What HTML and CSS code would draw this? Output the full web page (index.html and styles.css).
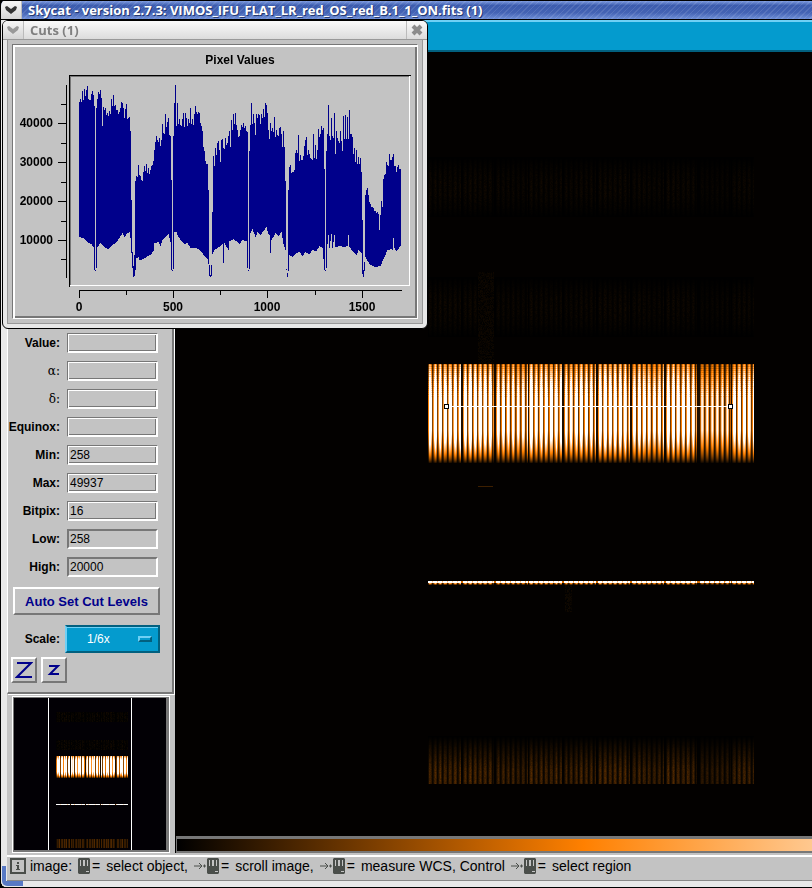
FILE: index.html
```html
<!DOCTYPE html>
<html lang="en">
<head>
<meta charset="utf-8"/>
<meta content="width=device-width, initial-scale=1.0" name="viewport"/>
<title>Skycat - version 2.7.3</title>
<link rel="stylesheet" href="styles.css">
</head>
<body>
<div class="main-window">
  <header class="titlebar">
    <button class="title-menu" aria-label="Window menu">
      <svg width="14" height="10" viewBox="0 0 14 10"><path d="M1 2 L3 1 L7 4 L11 1 L13 2 L12 5 L7 9 L2 5 Z" fill="#333"/></svg>
    </button>
    <span class="title-text">Skycat - version 2.7.3: VIMOS_IFU_FLAT_LR_red_OS_red_B.1_1_ON.fits (1)</span>
  </header>
  <div class="frame">
    <div class="menubar"></div>
    <div class="workspace">
      <aside class="sidebar">
        <form class="panel">
          <div class="field"><label for="value">Value:</label><input id="value" type="text" readonly></div>
          <div class="field"><label class="greek" for="alpha">α:</label><input id="alpha" type="text" readonly></div>
          <div class="field"><label class="greek" for="delta">δ:</label><input id="delta" type="text" readonly></div>
          <div class="field"><label for="equinox">Equinox:</label><input id="equinox" type="text" readonly></div>
          <div class="field"><label for="min">Min:</label><input id="min" type="text" value="258" readonly></div>
          <div class="field"><label for="max">Max:</label><input id="max" type="text" value="49937" readonly></div>
          <div class="field"><label for="bitpix">Bitpix:</label><input id="bitpix" type="text" value="16" readonly></div>
          <div class="field"><label for="low">Low:</label><input class="editable" id="low" type="text" value="258"></div>
          <div class="field"><label for="high">High:</label><input class="editable" id="high" type="text" value="20000"></div>
          <button class="auto-cut" type="button">Auto Set Cut Levels</button>
          <div class="scale-row">
            <label for="scale">Scale:</label>
            <div class="scale-menu">
              <select id="scale"><option>1/6x</option></select>
            </div>
          </div>
          <div class="zoom-row">
            <button class="zoom-btn" type="button" aria-label="Zoom in">
              <svg width="18" height="18" viewBox="0 0 18 18"><path d="M2 2 H16 L2 16 H17" fill="none" stroke="#00008b" stroke-width="2"/></svg>
            </button>
            <button class="zoom-btn" type="button" aria-label="Zoom out">
              <svg width="18" height="18" viewBox="0 0 18 18"><path d="M4 5 H13 L5 13 H14" fill="none" stroke="#00008b" stroke-width="2"/></svg>
            </button>
          </div>
        </form>
        <div class="pan"><canvas id="pan" width="152" height="152"></canvas></div>
      </aside>
      <main class="viewer">
        <div class="image"><canvas id="sky" width="636" height="784"></canvas></div>
        <div class="colorbar"></div>
      </main>
    </div>
    <footer class="status">
      <svg class="info" width="16" height="16" viewBox="0 0 16 16"><rect x="1" y="1" width="14" height="14" fill="none" stroke="#4a4e4a" stroke-width="2"/><path d="M7 4h2v2H7zM6 7h3v4h1v1H6v-1h1V8H6z" fill="#4a4e4a"/></svg>
      <span class="word">image:</span>
      <svg class="mouse" width="12" height="16"><use href="#mouse"/></svg><span class="eq">=</span>
      <span class="word">select object,</span>
      <svg class="arrow" width="13" height="16"><use href="#arrow"/></svg><svg class="mouse" width="12" height="16"><use href="#mouse"/></svg><span class="eq">=</span>
      <span class="word">scroll image,</span>
      <svg class="arrow" width="13" height="16"><use href="#arrow"/></svg><svg class="mouse" width="12" height="16"><use href="#mouse"/></svg><span class="eq">=</span>
      <span class="word">measure WCS, Control</span>
      <svg class="arrow" width="13" height="16"><use href="#arrow"/></svg><svg class="mouse" width="12" height="16"><use href="#mouse"/></svg><span class="eq">=</span>
      <span class="word">select region</span>
    </footer>
  </div>
  <div class="corner"></div>
</div>

<section class="cuts-window">
  <header class="cuts-title">
    <button class="title-menu" aria-label="Cuts menu">
      <svg width="14" height="10" viewBox="0 0 14 10"><path d="M1 2 L3 1 L7 4 L11 1 L13 2 L12 5 L7 9 L2 5 Z" fill="#999"/></svg>
    </button>
    <span class="cuts-name">Cuts (1)</span>
    <button class="close" aria-label="Close">
      <svg width="12" height="12" viewBox="0 0 12 12"><path d="M2 2 L10 10 M10 2 L2 10" stroke="#8c8c8c" stroke-width="4"/></svg>
    </button>
  </header>
  <div class="cuts-body">
    <div class="graph">
      <svg id="plot" viewBox="15 47 400 269" width="400" height="269"></svg>
    </div>
  </div>
</section>

<svg class="symbols" width="0" height="0">
  <symbol id="mouse" viewBox="0 0 12 16">
    <path d="M1 0h10l1 1v14l-1 1H1l-1-1V1z" fill="#4a4e4a"/>
    <path d="M2 2h1v6H2zM5 2h2v6H5zM9 2h1v6H9zM8 13h3v1H8z" fill="#c3c3c3"/>
  </symbol>
  <symbol id="arrow" viewBox="0 0 13 16">
    <path d="M0 8h8M5 5l3 3-3 3M9 8h3M10.500 6.500v3" fill="none" stroke="#4a4e4a"/>
  </symbol>
</svg>
<script src="skycat.js"></script>
</body>
</html>
```
FILE: styles.css
```css
*, *::after {
  box-sizing: border-box;
}
body {
  margin: 0;
  background: #000;
  font-family: "Liberation Sans", Arial, sans-serif;
  font-size: 12px;
  color: #000;
}
button {
  padding: 0;
  border: none;
  background: none;
}
.symbols {
  position: absolute;
}

/* main window */
.main-window {
  position: relative;
  overflow: hidden;
  border-left: 1px solid #000;
  border-radius: 6px 0 0 6px;
}
.titlebar {
  display: flex;
  align-items: center;
  height: 20px;
  border-top: 1px solid #000;
  border-bottom: 1px solid #000;
  background:
    repeating-linear-gradient(135deg, rgba(255, 255, 255, 0.10) 0 1px, transparent 1px 4px),
    linear-gradient(#7d9be0, #3c5cae 25%, #4463b4 65%, #6f8fd8);
  color: #fff;
}
.title-menu {
  display: flex;
  align-items: center;
  justify-content: center;
  width: 21px;
  height: 18px;
  border-right: 1px solid #bbb;
  background: linear-gradient(#f6f6f6, #d4d4d4);
}
.title-text {
  padding-left: 6px;
  font-family: "Open Sans", sans-serif;
  font-size: 13px;
  font-weight: bold;
  line-height: 18px;
  text-shadow: 1px 1px 0 #23386f;
  white-space: nowrap;
}
.frame {
  border-left: 6px solid #e8e8e8;
  border-bottom: 6px solid #e8e8e8;
  background: #c3c3c3;
}
.menubar {
  height: 32px;
  border-top: 2px solid #6fd0f5;
  border-bottom: 2px solid #02607f;
  background: #049bce;
}
.workspace {
  display: grid;
  grid-template-columns: 168px minmax(0, 1fr);
}
.corner {
  position: absolute;
  left: 1px;
  bottom: 1px;
  width: 21px;
  height: 20px;
  border-left: 4px solid #5879c4;
  border-bottom: 5px solid #5879c4;
  border-bottom-left-radius: 5px;
}

/* controls */
.sidebar {
  display: flex;
  flex-direction: column;
}
.panel {
  flex: 1;
  display: flex;
  flex-direction: column;
  justify-content: flex-end;
  padding: 0 14px 9px 3px;
  border-left: 1px solid #fff;
  border-right: 2px solid #777;
  border-bottom: 2px solid #777;
  box-shadow: 1px 1px 0 #fff;
  margin-right: 1px;
}
label {
  font-weight: bold;
  text-align: right;
}
.field {
  display: flex;
  gap: 7px;
  align-items: center;
  justify-content: flex-end;
  margin-bottom: 8px;
}
.field label {
  white-space: nowrap;
}
.field .greek {
  font-family: "DejaVu Serif", serif;
  font-weight: normal;
}
.field input {
  flex: none;
  width: 91px;
  height: 20px;
  padding: 0 2px;
  border: 1px solid;
  border-color: #777 #fff #fff #777;
  outline: 1px solid;
  outline-color: #fff;
  outline-offset: -2px;
  background: #c3c3c3;
  font-family: inherit;
  font-size: 12px;
  color: #000;
  border-radius: 0;
  box-shadow: inset -2px -2px 0 #777;
}
.field input.editable {
  border-width: 2px;
  padding: 0 1px;
  outline: none;
  box-shadow: none;
}
.auto-cut {
  align-self: flex-end;
  width: 147px;
  height: 28px;
  margin: 2px -2px 0 0;
  border: 2px solid;
  border-color: #fff #777 #777 #fff;
  font-family: inherit;
  font-size: 13px;
  font-weight: bold;
  color: #00008b;
  white-space: nowrap;
}
.scale-row {
  display: flex;
  align-items: center;
  justify-content: flex-end;
  gap: 5px;
  margin: 10px -2px 0 0;
}
.scale-menu {
  position: relative;
  width: 95px;
  height: 28px;
}
.scale-menu select {
  appearance: none;
  width: 100%;
  height: 100%;
  padding: 0 0 0 20px;
  border: 2px solid;
  border-color: #02607f #02607f #02607f #6fd0f5;
  border-radius: 0;
  box-shadow: inset 0 1px 0 #6fd0f5;
  background: #049bce;
  font-family: inherit;
  font-size: 12px;
  color: #fff;
}
.scale-menu::after {
  content: "";
  position: absolute;
  right: 8px;
  top: 11px;
  width: 14px;
  height: 6px;
  border: 2px solid;
  border-color: #6fd0f5 #02607f #02607f #6fd0f5;
}
.zoom-row {
  display: flex;
  gap: 4px;
  margin-top: 4px;
}
.zoom-btn {
  display: flex;
  align-items: center;
  justify-content: center;
  width: 26px;
  height: 26px;
  border: 2px solid;
  border-color: #fff #777 #777 #fff;
}
.pan {
  margin: 2px 5px 0 5px;
  padding: 1px 2px 2px 1px;
  border: 1px solid;
  border-color: #fff;
  background: #777;
}
.pan canvas {
  display: block;
}

/* image */
.viewer {
  border-left: 1px solid #000;
}
.image {
  overflow: hidden;
  background: #000;
}
.image canvas {
  display: block;
}
.colorbar {
  height: 17px;
  border: 1px solid #777;
  border-width: 3px 0 2px 1px;
  background: linear-gradient(to right, #000, #ff8000 64%, #ffc88f);
}
.status {
  display: flex;
  align-items: center;
  height: 26px;
  margin-top: 2px;
  padding: 0 0 5px 3px;
  border-top: 2px solid #fff;
  border-bottom: 1px solid #888;
  font-size: 14px;
  white-space: nowrap;
}
.status svg {
  flex: none;
}
.word {
  margin: 0 6px 0 4px;
}
.eq {
  margin: 0 2px 0 2px;
}

/* cuts window */
.cuts-window {
  position: absolute;
  left: 2px;
  top: 20px;
  width: 426px;
  border: 1px solid #000;
  border-radius: 6px;
  background: #e8e8e8;
  overflow: hidden;
}
.cuts-title {
  display: flex;
  align-items: center;
  height: 19px;
  border-bottom: 1px solid #999;
  background: linear-gradient(#fafafa, #dcdcdc);
}
.cuts-name {
  flex: 1;
  padding-left: 6px;
  font-family: "Open Sans", sans-serif;
  font-size: 13px;
  font-weight: bold;
  line-height: 18px;
  color: #808080;
}
.close {
  display: flex;
  align-items: center;
  justify-content: center;
  width: 21px;
  height: 18px;
  border-left: 1px solid #bbb;
}
.cuts-body {
  margin: 0 4px 4px;
  padding: 4px;
  border: 1px solid #999;
  border-top: none;
  background: #c3c3c3;
}
.graph {
  border: 1px solid;
  border-color: #777 #fff #fff #777;
  padding: 2px 0 2px 2px;
  box-shadow: inset 2px 2px 0 #fff, inset -2px -2px 0 #777;
}
.graph svg {
  display: block;
}
.graph text {
  font-family: "Liberation Sans", Arial, sans-serif;
  font-size: 12px;
  font-weight: bold;
}
```
FILE: skycat.js
```js
// ---- cut graph ----
// upper edge of the trace, one value per column, keyed by first column
const TOPS = {
  79: [102,99,102,91,100,89,96,90,86,99,100,100,94,91,95,106,270],
  96: [108,99,92,94,90,98,126,107,110,108,115,113,116,111,114,99,106,95,106,105,110,110,114,112,108,102,103,108,118,109,104,119,118,117,131],
  131: [200,252,266,255],
  135: [181,176,177,165,175,176,180,181,172,166,171,164,173,168,174,170,166,165,161,150,142,136,140,142,138,146,140,124,133,134,114,127,122,118,135,136],
  171: [180,270],
  173: [136,103,85,126,103,124,119,125,126,119,113,127,113,118,126,119,123,108,124,119,125,114,106,112,114,112,113,123,126,131,147,151,161,164],
  208: [190,265,275,265,212],
  213: [156,166,148,155,143,141,150,162,140,139,148,149,138,145,143,136,131,147,120,130,114,124,113,125,130,137,136,130,125,127,123,128,126,131,132,144],
  248: [270],
  249: [151,125,103,124,114,123,135,114,118,114,115,124,114,118,109,117,103,105,113,130,139,123,131,128,132,117,137,130,135,136,128,127,134,147,131,147],
  285: [181,269,273,190],
  289: [167,165,173,172,172,170,153,150,153,135,161,155,160,160,156,146,140,137,155,150,154,158,159,160,134,158,145,159,150,129,137,134,126,130,128,169],
  325: [270],
  326: [151,134,105,136,140,118,136,138,113,154,131,138,141,143,131,141,151,116,139,115,139,117,139,110,134,134,137,154,148,162,150,164,157,164,158,172],
  362: [220,270,262],
  365: [195,190,188,195,202,204,207,207,208,211,211,213,212,214,230,215,201,207,179,175,174,162,165,166,154,160,160,157,154,166,166,172,167,165,169,169]
};
const BOTTOMS = [
  [79,237],[83,238],[88,243],[91,244],[93,247],[94,270],[95,271],[96,268],[97,247],[100,243],[105,248],[108,249],[111,246],
  [117,241],[120,236],[122,233],[124,237],[126,234],[129,232],[130,238],[131,253],[132,268],[133,277],[134,276],[135,270],
  [136,258],[138,257],[139,260],[143,259],[147,256],[150,255],[153,251],[154,243],[158,242],[160,246],[162,240],[165,237],
  [168,234],[169,238],[170,242],[171,270],[172,271],[173,269],[174,232],[176,232],[178,237],[181,241],[184,244],[187,243],
  [190,248],[195,248],[198,249],[201,252],[204,256],[207,259],[208,264],[209,276],[210,277],[211,276],[212,254],[214,250],
  [217,248],[221,245],[222,244],[223,263],[224,243],[228,250],[229,241],[233,239],[237,242],[239,244],[242,240],[246,241],
  [247,268],[248,271],[249,269],[250,233],[252,229],[255,237],[257,232],[260,235],[263,231],[266,227],[268,234],[269,235],
  [270,253],[271,240],[275,233],[278,236],[281,232],[283,244],[285,250],[286,270],[287,277],[288,271],[289,255],[292,257],
  [296,253],[299,252],[302,256],[305,252],[309,254],[312,250],[316,251],[319,246],[322,248],[324,270],[325,271],[326,268],
  [327,244],[328,235],[329,248],[331,234],[332,248],[334,235],[335,247],[340,246],[343,247],[347,246],[348,235],[349,247],
  [352,251],[356,255],[358,250],[361,253],[362,274],[363,277],[364,271],[365,257],[369,264],[375,267],[380,266],[383,259],
  [387,250],[391,249],[392,250],[393,238],[394,248],[396,251],[400,246]
];

function bottomAt(x) {
  for (let i = 1; i < BOTTOMS.length; i++) {
    const [x0, y0] = BOTTOMS[i - 1];
    const [x1, y1] = BOTTOMS[i];
    if (x <= x1) return Math.round(y0 + (y1 - y0) * (x - x0) / (x1 - x0));
  }
  return 248;
}

function line(x, y, w, h, color) {
  return `<rect x="${x}" y="${y}" width="${w}" height="${h}" fill="${color}"/>`;
}

function drawPlot() {
  let s = '<text x="240" y="64" text-anchor="middle">Pixel Values</text>';
  // plot frame
  s += line(69, 75, 342, 1, "#000") + line(69, 75, 1, 212, "#000");
  s += line(70, 76, 340, 1, "#777") + line(70, 76, 1, 210, "#777");
  s += line(409, 76, 1, 210, "#fff") + line(70, 285, 340, 1, "#fff");
  // axes
  s += line(66, 85, 1, 193, "#000") + line(79, 290, 323, 1, "#000");
  for (const [y, label] of [[123, "40000"], [162, "30000"], [201, "20000"], [240, "10000"]]) {
    s += line(58, y, 8, 1, "#000");
    s += `<text x="53" y="${y + 4}" text-anchor="end">${label}</text>`;
  }
  for (const y of [104, 143, 182, 221, 259]) s += line(61, y, 5, 1, "#000");
  for (const [x, label] of [[79, "0"], [173, "500"], [267, "1000"], [362, "1500"]]) {
    s += line(x, 290, 1, 8, "#000");
    s += `<text x="${x}" y="311" text-anchor="middle">${label}</text>`;
  }
  for (const x of [126, 220, 315]) s += line(x, 290, 1, 5, "#000");

  const tops = [];
  for (const start in TOPS) {
    TOPS[start].forEach((top, i) => { tops[Number(start) + i] = top; });
  }
  let d = "";
  for (let x = 79; x <= 400; x++) {
    const top = tops[x] || tops[x - 1];
    const bottom = Math.max(bottomAt(x), top + 1);
    d += `M${x} ${top}h1V${bottom}h-1z`;
  }
  s += `<path d="${d}" fill="#00008b" shape-rendering="crispEdges"/>`;
  document.getElementById("plot").innerHTML = s;
}

// ---- spectra image ----
const LEFT = 252, RIGHT = 578;
const GAPS = [[285, 2], [318, 2], [352, 1], [386, 2], [420, 2], [454, 2], [488, 2], [521, 3], [555, 1]];
const BLOCK = [1.05, 1.1, 0.85, 1, 0.9, 1.05, 0.9, 1, 0.6, 0.9];

let seed = 7;
function rnd() {
  seed = (seed * 16807) % 2147483647;
  return seed / 2147483647;
}

function fiberProfile() {
  const f = [];
  for (let x = LEFT; x < RIGHT; x++) {
    let block = 0, start = LEFT, gap = false;
    for (const [g, w] of GAPS) {
      if (x >= g && x < g + w) gap = true;
      if (x >= g + w) { block++; start = g + w; }
    }
    const phase = (x - start) % 5;
    const shape = [0.6, 1.4, 1.7, 1.1, 0.25][phase];
    f.push(gap ? 0.06 : shape * BLOCK[block] * (0.8 + 0.3 * rnd()));
  }
  return f;
}

function color(v) {
  v = Math.max(0, Math.min(1, v));
  return [Math.min(255, v * 510), v * 255, Math.max(0, v * 510 - 255)];
}

function drawSky() {
  const canvas = document.getElementById("sky");
  const ctx = canvas.getContext("2d");
  const img = ctx.createImageData(canvas.width, canvas.height);
  const fibers = fiberProfile();

  function put(x, y, v) {
    const i = (y * canvas.width + x) * 4;
    const c = color(v);
    img.data[i] = c[0];
    img.data[i + 1] = c[1];
    img.data[i + 2] = c[2];
    img.data[i + 3] = 255;
  }

  for (let y = 0; y < canvas.height; y++) {
    for (let x = 0; x < canvas.width; x++) put(x, y, 0.005);
  }
  for (let x = LEFT; x < RIGHT; x++) {
    const f = fibers[x - LEFT];
    // faint orders above the main one
    for (let y = 105; y < 165; y++) {
      put(x, y, 0.018 * f * Math.sin((y - 105) / 60 * Math.PI) * (0.4 + rnd() * 0.7));
    }
    for (let y = 225; y < 285; y++) {
      put(x, y, 0.018 * f * Math.sin((y - 225) / 60 * Math.PI) * (0.4 + rnd() * 0.7));
    }
    // main order
    for (let y = 312; y < 411; y++) {
      let e = 1;
      if (y < 345) {
        e = 0.4 + 0.6 * (y - 312) / 33;
        e *= y % 2 ? 1.1 : 0.85 + 0.15 * rnd();
      }
      if (y > 378) e = Math.pow((411 - y) / 33, 0.85);
      put(x, y, f * e);
    }
    // zero order
    put(x, 529, 0.3 + f * 1.7);
    put(x, 530, 0.3 + f * 2.2);
    put(x, 531, f * 0.4);
    put(x, 532, f * 0.15);
    for (let y = 684; y < 732; y++) {
      put(x, y, 0.085 * f * Math.min(1, (y - 684) / 34) * (0.8 + rnd() * 0.3));
    }
  }
  // ghosts
  for (let y = 220; y < 312; y++) for (let x = 302; x < 318; x++) put(x, y, 0.03 * rnd());
  for (let y = 533; y < 560; y++) for (let x = 389; x < 396; x++) put(x, y, 0.035 * rnd());
  for (let x = 302; x < 317; x++) put(x, 434, 0.12);
  ctx.putImageData(img, 0, 0);
}

function drawPan() {
  const pan = document.getElementById("pan").getContext("2d");
  pan.fillStyle = "#020005";
  pan.fillRect(0, 0, 152, 152);
  pan.fillStyle = "#fff";
  pan.fillRect(34, 0, 1, 152);
  pan.fillRect(117, 0, 1, 152);
  for (let x = 0; x < 72; x++) {
    const gap = x % 15 === 14;
    const f = gap ? 0.05 : [0.5, 1.5, 0.9, 1.8, 0.25, 1.3, 1.6][x % 7] * (0.8 + 0.4 * rnd());
    const dot = (y, v) => {
      pan.fillStyle = `rgb(${color(v).map(Math.round).join(",")})`;
      pan.fillRect(42 + x, y, 1, 1);
    };
    for (let y = 14; y < 24; y++) dot(y, 0.02 * f * rnd());
    for (let y = 42; y < 52; y++) dot(y, 0.02 * f * rnd());
    for (let y = 58; y < 80; y++) {
      let e = 1;
      if (y < 62) e = 0.5 + (y - 58) / 8;
      if (y > 73) e = (80 - y) / 7;
      dot(y, f * e);
    }
    dot(106, gap ? 0.15 : 0.6 + f);
    for (let y = 141; y < 150; y++) dot(y, 0.08 * f);
  }
}

function drawCutLine() {
  const ctx = document.getElementById("sky").getContext("2d");
  ctx.fillStyle = "#fff";
  ctx.fillRect(270, 354, 285, 1);
  for (const x of [268, 552]) {
    ctx.fillStyle = "#000";
    ctx.fillRect(x, 352, 5, 5);
    ctx.fillStyle = "#fff";
    ctx.fillRect(x + 1, 353, 3, 3);
  }
}

drawPlot();
drawSky();
drawPan();
drawCutLine();
```
